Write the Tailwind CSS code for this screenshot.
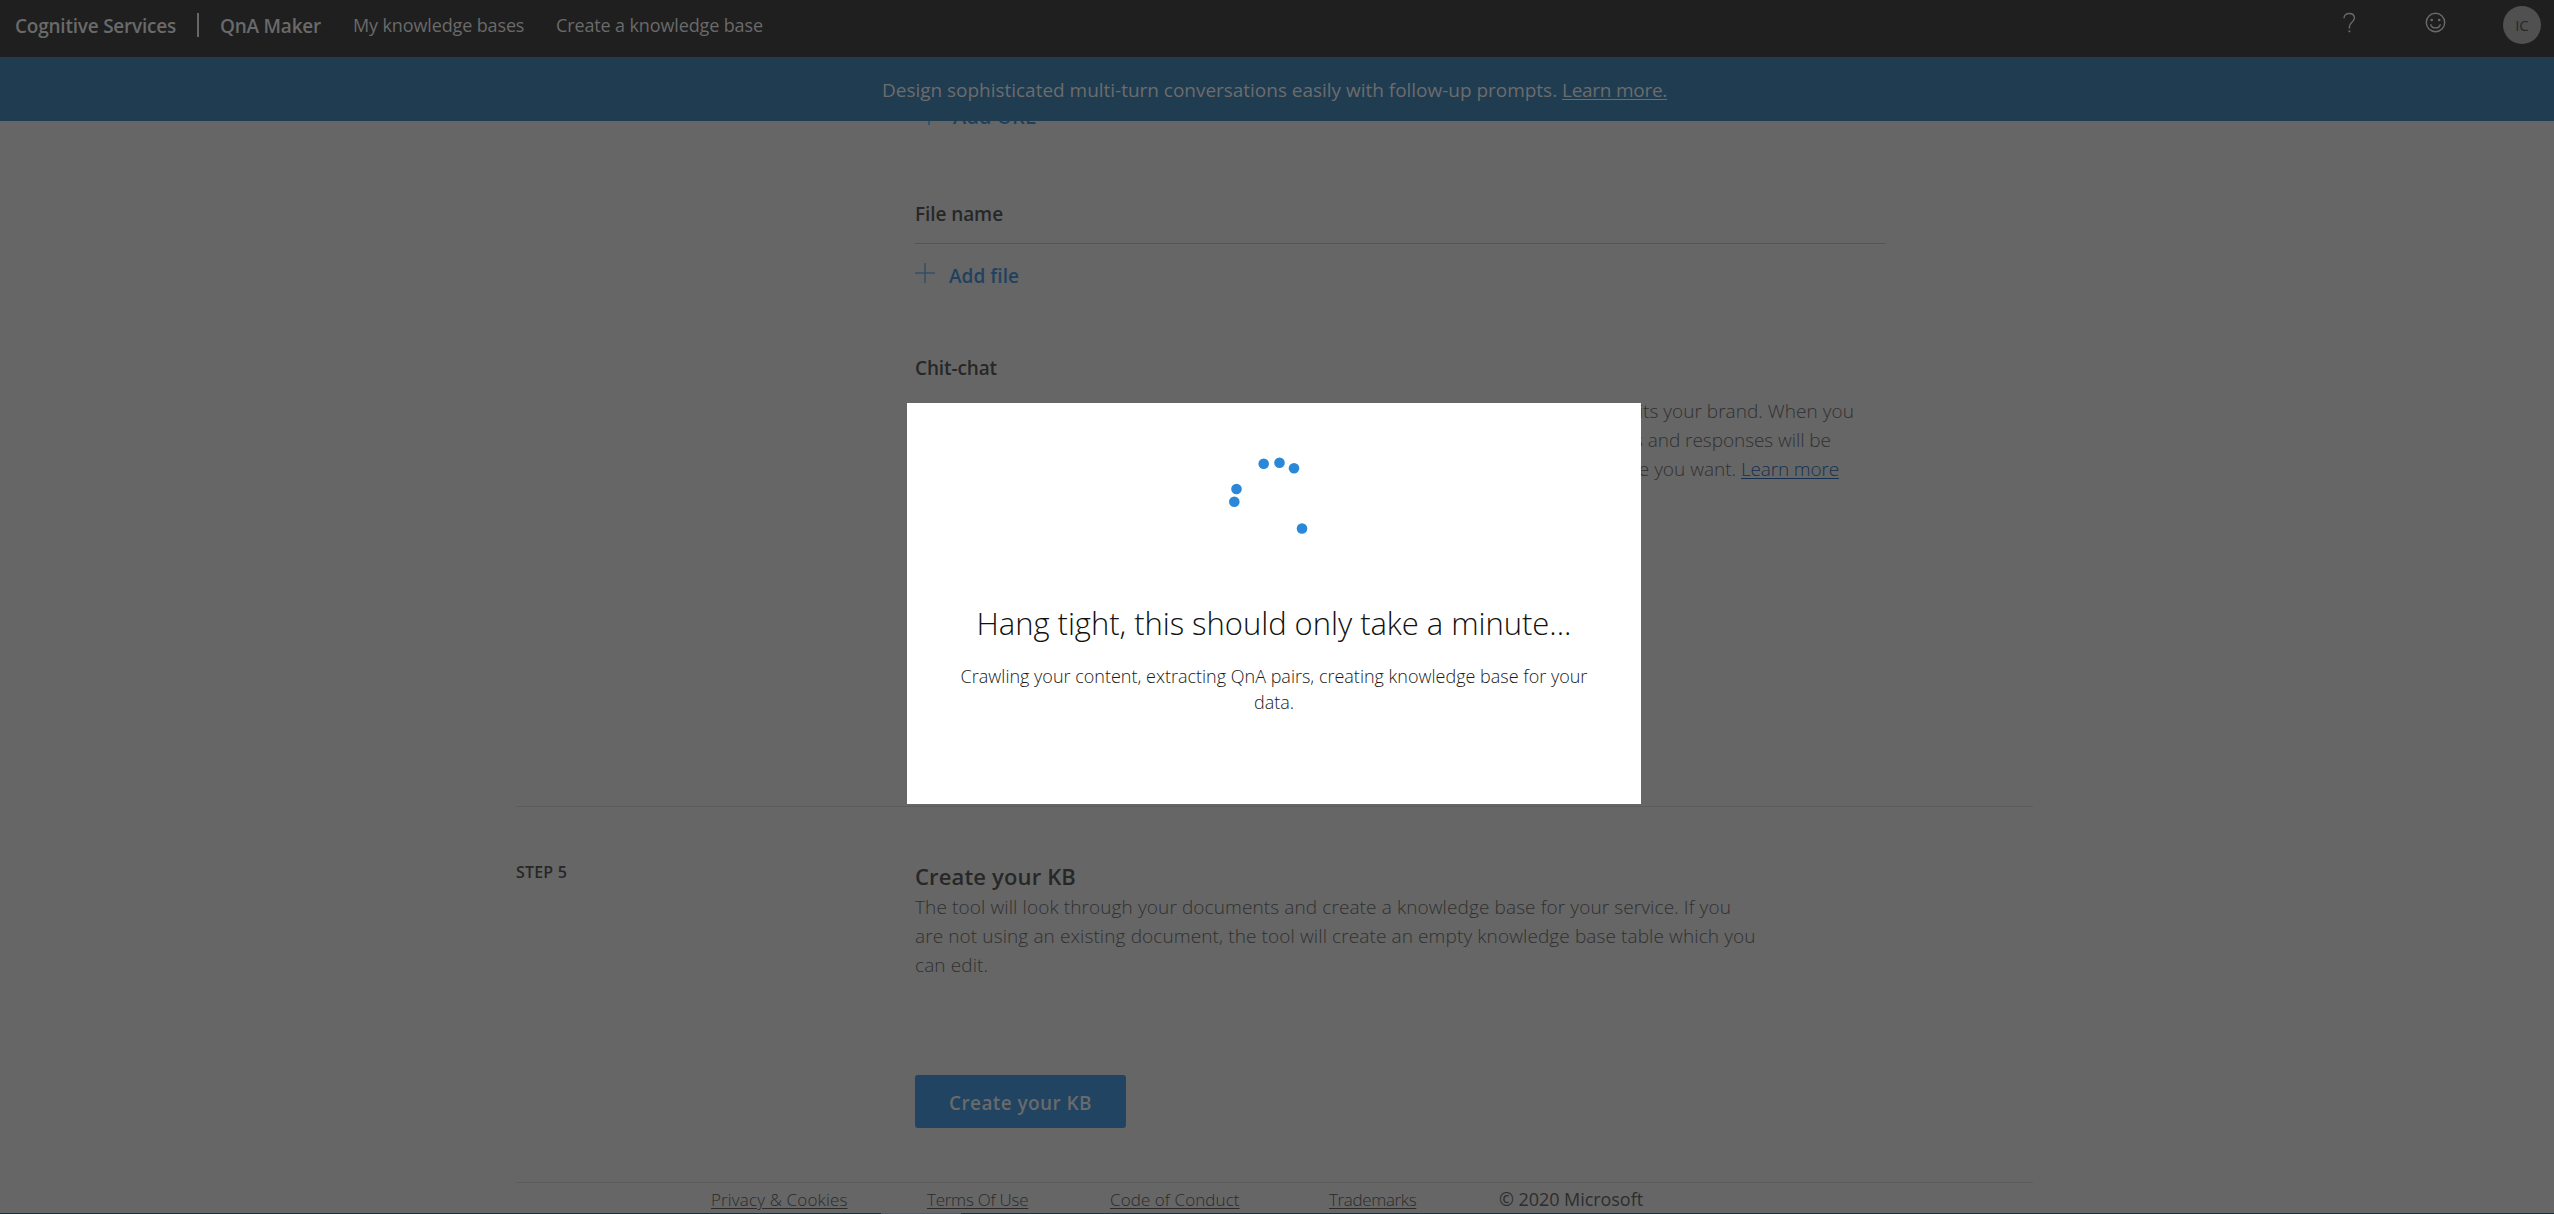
<!DOCTYPE html>
<html lang="en">
<head>
<meta charset="utf-8">
<title>QnA Maker</title>
<script src="https://cdn.jsdelivr.net/npm/@tailwindcss/browser@4"></script>
</head>
<body class="relative h-[1214px] w-[2554px] overflow-hidden bg-[#666666] font-['Open_Sans',sans-serif] text-[19px] whitespace-nowrap text-[#272727] flex flex-col">
  <header class="flex h-[57px] shrink-0 items-start bg-[#1f1f1f] pl-[15px] text-[#6a6a6a]">
    <div class="mt-3 w-[182px] text-[19px]/[28px] font-semibold tracking-[-0.225px]">Cognitive Services</div>
    <div class="mt-[13px] h-6 w-0.5 bg-[#666666]"></div>
    <div class="mt-3 ml-[21px] w-[133px] text-[19px]/[28px] font-semibold tracking-[-0.231px]">QnA Maker</div>
    <nav class="mt-3 flex text-[18px]/[27px] tracking-[-0.13px]">
      <a class="w-[203px]">My knowledge bases</a>
      <a>Create a knowledge base</a>
    </nav>
    <div class="mr-[13px] ml-auto flex">
      <svg class="mt-3 mr-[69px] h-[21px] w-[13px]" viewBox="0 0 13 21" fill="none" stroke="#6a6a6a" stroke-width="1.4"><path d="M1 6.3C1 3.200 3.200 1.500 6.200 1.500s5.200 1.700 5.200 4.500c0 4.100-5 4.500-5 8.800v1.700"/><path d="M6.400 18.400v1.800" stroke-width="1.800"/></svg>
      <svg class="mt-3 mr-[57px] h-[21px] w-[21px]" viewBox="0 0 21 21" fill="none" stroke="#6a6a6a" stroke-width="1.400"><circle cx="10.500" cy="10.500" r="9.200"/><path d="M5.600 12.200a5.100 5.100 0 0 0 9.800 0"/><circle cx="6.700" cy="8" r="1.300" fill="#6a6a6a" stroke="none"/><circle cx="14.200" cy="8" r="1.300" fill="#6a6a6a" stroke="none"/></svg>
      <div class="mt-1.5 flex h-[38px] w-[38px] items-center justify-center rounded-full bg-[#505050] text-[15px] text-[#272727]">IC</div>
    </div>
  </header>

  <div class="z-10 flex h-16 shrink-0 bg-[#203c51] pt-[17px] pl-[882px] text-[19px]/[28px] text-[#6c6c6c]">
    <p class="mt-0.5 whitespace-pre tracking-[-0.023px]">Design sophisticated multi-turn conversations easily with follow-up prompts. <a class="tracking-[-0.267px] underline underline-offset-2">Learn more.</a></p>
  </div>

  <main class="ml-[516px] w-[1517px]">
    <section class="-mt-[18px] ml-[399px]">
      <div class="flex pl-1 font-semibold text-[#1f4160]">
        <svg class="mt-0.5 mr-[14px] h-5 w-5" viewBox="0 0 20 20" stroke="#2b4a6b" stroke-width="1.500"><path d="M0.500 10.500h19M10 0.500v20"/></svg>
        <a class="text-[20px]/[28px] tracking-[0.170px]">Add URL</a>
      </div>
      <h3 class="mt-[69px] text-[19px]/[28px] font-semibold tracking-[-0.085px]">File name</h3>
      <div class="mt-[15px] h-px w-[971px] bg-[#555555]"></div>
      <div class="mt-[18px] flex font-semibold text-[#1f4160]">
        <svg class="mt-px mr-[14px] h-5 w-5" viewBox="0 0 20 20" stroke="#364e68" stroke-width="1.500"><path d="M0 10h20M10 0v20"/></svg>
        <a class="text-[19px]/[28px] tracking-[0.054px]">Add file</a>
      </div>
      <h3 class="mt-16 text-[19px]/[28px] font-semibold tracking-[-0.120px]">Chit-chat</h3>
      <div class="mt-[15px] text-right text-[19px]/[29px] font-light text-[#303030]">
        <p class="w-[939px] tracking-[0.037px]">fits your brand. When you</p>
        <p class="w-[916px] tracking-[-0.050px]">questions and responses will be</p>
        <p class="w-[924px]">time you want. <a class="tracking-[-0.155px] text-[#15314f] underline underline-offset-2">Learn more</a></p>
      </div>
    </section>

    <section class="mt-[322px] flex h-[376px] items-start border-t border-[#5c5c5c]">
      <div class="mt-[53px] w-[399px] text-[16px]/[24px] font-semibold tracking-[0.182px]">STEP 5</div>
      <div class="mt-[55px]">
        <h2 class="text-[22px]/[29px] font-semibold tracking-[0.150px]">Create your KB</h2>
        <p class="mt-0.5 text-[19px]/[29px] font-light tracking-[0.109px] text-[#303030]">The tool will look through your documents and create a knowledge base for your service. If you<br>are not using an existing document, the tool will create an empty knowledge base table which you<br>can edit.</p>
        <button class="mt-[95px] block h-[53px] w-[211px] rounded-[3px] bg-[#204462] pt-[3px] text-[19px] font-semibold tracking-[0.412px] text-[#6a6a6a]">Create your KB</button>
      </div>
    </section>
  </main>

  <footer class="ml-[516px] flex w-[1517px] border-t border-[#5c5c5c] pt-[5px] pl-[195px] text-[17px]/[24px] font-light text-[#2a2a2a]">
    <a class="w-[216px]"><span class="tracking-[0.154px] underline underline-offset-2">Privacy &amp; Cookies</span></a>
    <a class="w-[183px]"><span class="tracking-[-0.250px] underline underline-offset-2">Terms Of Use</span></a>
    <a class="w-[219px]"><span class="tracking-[0.080px] underline underline-offset-2">Code of Conduct</span></a>
    <a class="w-[170px]"><span class="tracking-[-0.350px] underline underline-offset-2">Trademarks</span></a>
    <span class="-mt-px text-[18px]/[25px] font-normal tracking-[-0.057px] text-[#2d2d2d]">© 2020 Microsoft</span>
  </footer>

  <!-- taskbar edge -->
  <div class="absolute bottom-0 left-0 flex h-px w-full bg-[#1c2f3c]"><div class="ml-[881px] w-20 bg-[#4d5a66]"></div></div>

  <!-- progress dialog -->
  <div role="dialog" class="absolute top-[403px] left-[907px] z-20 flex h-[401px] w-[734px] flex-col items-center bg-white pt-[47px] text-center">
    <svg class="h-[92px] w-[92px]" viewBox="1228 450 92 92" fill="#2b88d8"><circle cx="1263.700" cy="463.700" r="5.300"/><circle cx="1279.500" cy="462.700" r="5.300"/><circle cx="1294" cy="468.200" r="5.300"/><circle cx="1236.500" cy="489" r="5.300"/><circle cx="1234.300" cy="501.700" r="5.300"/><circle cx="1302" cy="528.500" r="5.300"/></svg>
    <h1 class="mt-[61px] text-[31px]/[40px] font-light tracking-[-0.040px] text-[#111111]">Hang tight, this should only take a minute...</h1>
    <p class="mt-5 text-[18px]/[26px] font-light text-[#1a1a1a]">Crawling your content, extracting QnA pairs, creating knowledge base for your<br>data.</p>
  </div>
</body>
</html>
